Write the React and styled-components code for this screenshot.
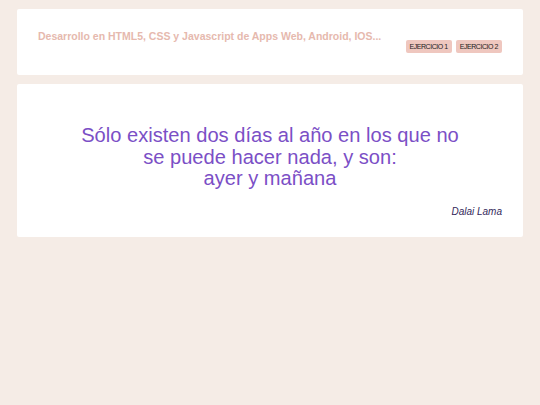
import styled, { createGlobalStyle } from 'styled-components';

const Global = createGlobalStyle`
  html, body {
    margin: 0;
    padding: 0;
    background: #f5ece6;
    font-family: "Liberation Sans", Arial, sans-serif;
  }
`

const Page = styled.div`
  padding: 9px 17px;
  display: flex;
  flex-direction: column;
  gap: 9px;
`

const Card = styled.section`
  background: #fff;
  border-radius: 2px;
  padding: ${p => p.$pad};
`

const Title = styled.h1`
  margin: 0;
  font-size: 10.5px;
  line-height: 12px;
  font-weight: bold;
  color: #e6b9ae;
`

const Nav = styled.nav`
  display: flex;
  justify-content: flex-end;
  gap: 4px;
  margin-top: -2px;
`

const Btn = styled.button`
  border: none;
  border-radius: 2px;
  background: #efc7bf;
  color: #222;
  font-family: "Liberation Sans", Arial, sans-serif;
  font-size: 7px;
  letter-spacing: -0.45px;
  padding: 0 4px;
  height: 13px;
`

const Quote = styled.blockquote`
  margin: 0;
  text-align: center;
  font-size: 20.1px;
  line-height: 21.5px;
  color: #7b4fc6;
`

const Author = styled.p`
  margin: 16px 0 0;
  text-align: right;
  font-size: 10px;
  font-style: italic;
  color: #33295a;
`

export default function App() {
  return (
    <>
      <Global />
      <Page>
        <Card $pad="21px 21px 22px">
          <Title>Desarrollo en HTML5, CSS y Javascript de Apps Web, Android, IOS...</Title>
          <Nav>
            <Btn>EJERCICIO 1</Btn>
            <Btn>EJERCICIO 2</Btn>
          </Nav>
        </Card>
        <Card $pad="41px 21px 20px">
          <Quote>
            Sólo existen dos días al año en los que no<br />
            se puede hacer nada, y son:<br />
            ayer y mañana
          </Quote>
          <Author>Dalai Lama</Author>
        </Card>
      </Page>
    </>
  );
}
